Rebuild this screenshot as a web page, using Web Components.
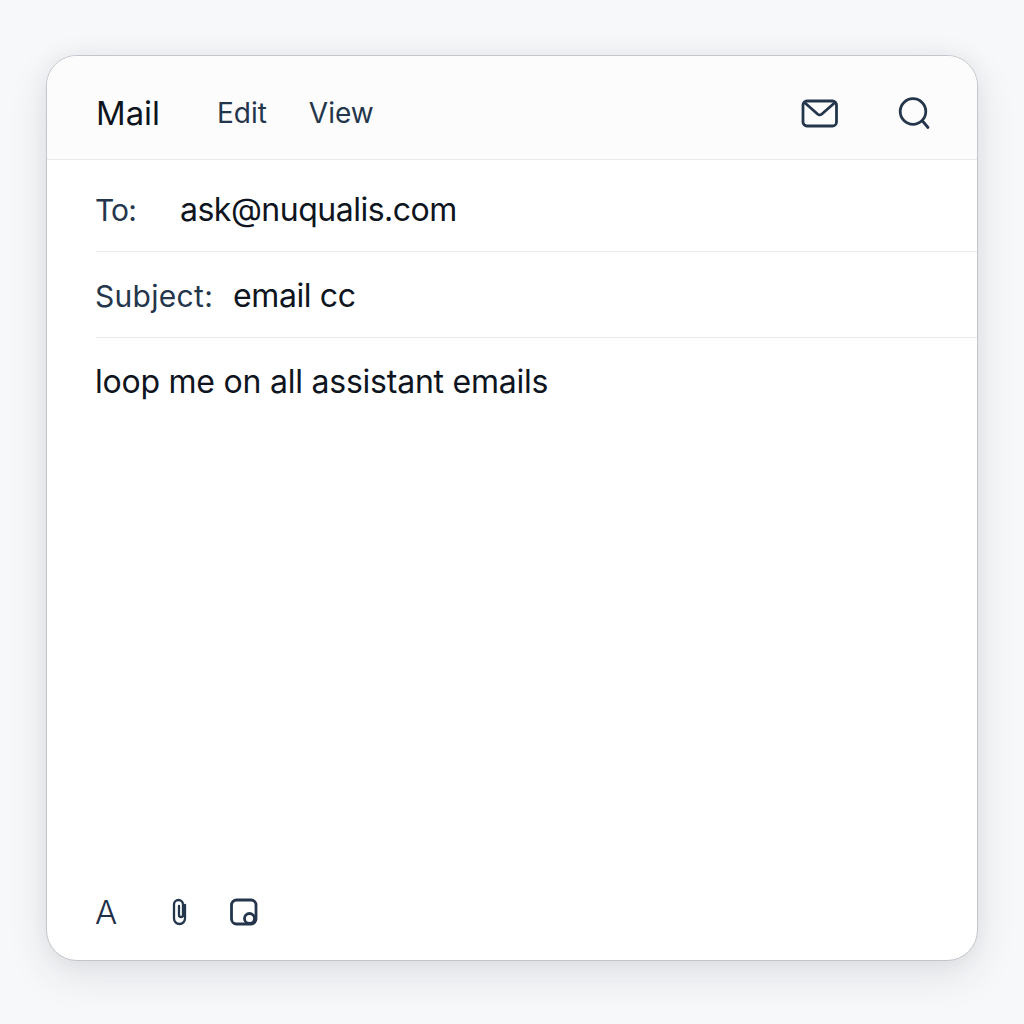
<!DOCTYPE html>
<html>
<head>
<meta charset="utf-8">
<title>Mail</title>
<style>
html,body{height:100%;margin:0}
body{
    background:#f7f8fa;
    font-family:"Inter","Liberation Sans",sans-serif;
    box-sizing:border-box;
    padding:55px 46px 63px 46px;
    display:flex;
}
</style>
</head>
<body>
<mail-window>
    <mail-header slot="header" title="Mail">
        <mail-menu-item>Edit</mail-menu-item>
        <mail-menu-item>View</mail-menu-item>
        <mail-icon slot="actions" name="mail" size="40"></mail-icon>
        <mail-icon slot="actions" name="search" size="36"></mail-icon>
    </mail-header>
    <mail-field label="To:" label-width="85" height="92" offset="8" style="--label-spacing:-.9px;--value-spacing:-.5px">ask@nuqualis.com</mail-field>
    <mail-field label="Subject:" label-width="138" height="86" offset="2" style="--label-spacing:.3px;--value-spacing:-.4px">email cc</mail-field>
    <mail-body>loop me on all assistant emails</mail-body>
    <mail-toolbar slot="footer">
        <span style="font-size:33px;line-height:40px;color:#1f3047;font-weight:300;margin-left:-1px">A</span>
        <mail-icon name="clip" size="16" height="28"></mail-icon>
        <mail-icon name="note" size="28"></mail-icon>
    </mail-toolbar>
</mail-window>

<script>
class MailWindow extends HTMLElement {
    constructor() {
        super();
        this.attachShadow({ mode: 'open' }).innerHTML = `
        <style>
        :host{
            flex:1;
            display:flex;
            flex-direction:column;
            background:#fff;
            border:1px solid #c2c5ca;
            border-radius:31px;
            overflow:hidden;
            box-shadow:0 14px 40px rgba(40,44,52,.11),0 0 22px rgba(40,44,52,.05);
        }
        .content{flex:1;display:flex;flex-direction:column}
        </style>
        <slot name="header"></slot>
        <div class="content"><slot></slot></div>
        <slot name="footer"></slot>
        `
    }
}

class MailHeader extends HTMLElement {
    constructor() {
        super();
        this.attachShadow({ mode: 'open' }).innerHTML = `
        <style>
        :host{
            display:flex;
            align-items:center;
            box-sizing:border-box;
            height:104px;
            background:#fdfcfc;
            border-bottom:1px solid #e8e9eb;
            padding:10px 44px 0 49px;
        }
        .title{font-size:32.8px;color:#0e1520;margin-right:57px}
        .menu{display:flex;gap:42px;flex:1}
        .actions{display:flex;align-items:center;gap:57px}
        </style>
        <span class="title"></span>
        <div class="menu"><slot></slot></div>
        <div class="actions"><slot name="actions"></slot></div>
        `
        this.shadowRoot.querySelector('.title').textContent = this.getAttribute('title');
    }
}

class MailMenuItem extends HTMLElement {
    constructor() {
        super();
        this.attachShadow({ mode: 'open' }).innerHTML = `
        <style>
        :host{display:inline-block;font-size:28px;color:#24364b}
        </style>
        <slot></slot>
        `
    }
}

class MailField extends HTMLElement {
    constructor() {
        super();
        this.attachShadow({ mode: 'open' }).innerHTML = `
        <style>
        :host{display:block;padding-left:49px}
        .row{
            display:flex;
            align-items:center;
            border-bottom:1px solid #e8e9eb;
            box-sizing:border-box;
        }
        .label{font-size:30px;color:#24364b;flex:none;margin-left:-1px;letter-spacing:var(--label-spacing,0)}
        .value{font-size:32px;color:#0e1520;letter-spacing:var(--value-spacing,0)}
        </style>
        <div class="row">
            <span class="label"></span>
            <span class="value"><slot></slot></span>
        </div>
        `
        const label = this.shadowRoot.querySelector('.label');
        label.textContent = this.getAttribute('label');
        label.style.width = this.getAttribute('label-width') + 'px';
        const row = this.shadowRoot.querySelector('.row');
        row.style.height = this.getAttribute('height') + 'px';
        row.style.paddingTop = this.getAttribute('offset') + 'px';
    }
}

class MailBody extends HTMLElement {
    constructor() {
        super();
        this.attachShadow({ mode: 'open' }).innerHTML = `
        <style>
        :host{display:block;flex:1;padding:24px 48px;font-size:32px;line-height:40px;color:#0e1520;letter-spacing:-.23px}
        </style>
        <slot></slot>
        `
    }
}

class MailToolbar extends HTMLElement {
    constructor() {
        super();
        this.attachShadow({ mode: 'open' }).innerHTML = `
        <style>
        :host{display:grid;grid-template-columns:76px 58px auto;justify-content:start;align-items:center;height:40px;padding:0 49px 28px}
        </style>
        <slot></slot>
        `
    }
}

const ICONS = {
    mail: '<rect x="3" y="8" width="33.5" height="25" rx="4"/><path d="M4.5 9.5l13 11.5q2.2 1.8 4.4 0L35 9.5"/>',
    search: '<circle cx="16" cy="16.5" r="12.8"/><path d="M25.5 26l5.5 6.5"/>',
    clip: '<path stroke-width="2.3" d="M13 7V20.5a5.5 5.5 0 0 1-11 0V6.5a4.5 4.5 0 0 1 9 0V17a2 2 0 0 1-4 0V8"/>',
    note: '<rect x="1.5" y="2" width="24.5" height="24" rx="5"/><circle cx="19.5" cy="20.5" r="5" fill="#fff"/>'
};

class MailIcon extends HTMLElement {
    constructor() {
        super();
        const size = this.getAttribute('size') || 36;
        const height = this.getAttribute('height') || size;
        const name = this.getAttribute('name');
        this.attachShadow({ mode: 'open' }).innerHTML = `
        <style>
        :host{display:inline-flex;width:${size}px;height:${height}px;color:#24364b}
        svg{width:100%;height:100%;display:block;fill:none;stroke:currentColor;stroke-width:2.8;stroke-linecap:round;stroke-linejoin:round}
        </style>
        <svg viewBox="0 0 ${size} ${height}">${ICONS[name]}</svg>
        `
    }
}

customElements.define('mail-window', MailWindow);
customElements.define('mail-header', MailHeader);
customElements.define('mail-menu-item', MailMenuItem);
customElements.define('mail-field', MailField);
customElements.define('mail-body', MailBody);
customElements.define('mail-toolbar', MailToolbar);
customElements.define('mail-icon', MailIcon);
</script>
</body>
</html>
